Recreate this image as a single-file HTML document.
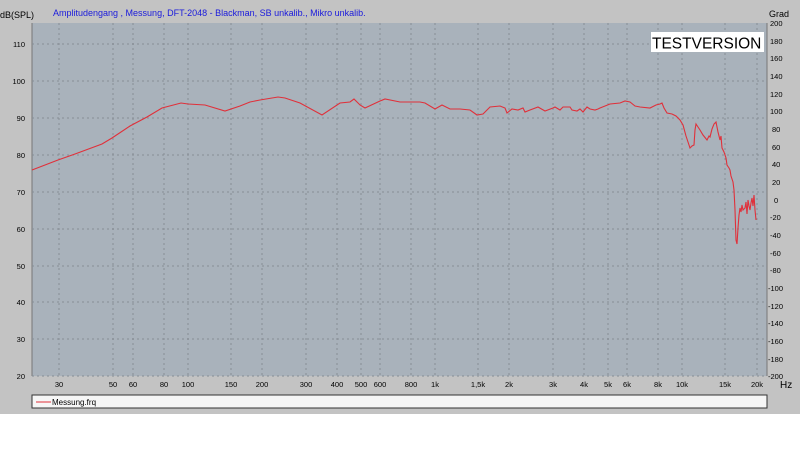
<!DOCTYPE html>
<html><head><style>
body{margin:0;width:800px;height:469px;background:#fff;overflow:hidden;font-family:"Liberation Sans",sans-serif}
</style></head><body>
<svg width="800" height="469" xmlns="http://www.w3.org/2000/svg" font-family="Liberation Sans, sans-serif">
<rect x="0" y="0" width="800" height="414" fill="#c3c3c3"/>
<rect x="32" y="23" width="735" height="353" fill="#a9b2bb"/>
<line x1="32" y1="23" x2="32" y2="376" stroke="#777"/>
<line x1="767" y1="23" x2="767" y2="376" stroke="#777"/>
<g stroke="#868d95" stroke-dasharray="2,3" stroke-width="1">
<line x1="32" y1="44" x2="767" y2="44"/><line x1="32" y1="81" x2="767" y2="81"/><line x1="32" y1="118" x2="767" y2="118"/><line x1="32" y1="155" x2="767" y2="155"/><line x1="32" y1="192" x2="767" y2="192"/><line x1="32" y1="229" x2="767" y2="229"/><line x1="32" y1="266" x2="767" y2="266"/><line x1="32" y1="302" x2="767" y2="302"/><line x1="32" y1="339" x2="767" y2="339"/><line x1="32" y1="376" x2="767" y2="376"/>
<line x1="59" y1="23" x2="59" y2="376"/><line x1="113" y1="23" x2="113" y2="376"/><line x1="133" y1="23" x2="133" y2="376"/><line x1="164" y1="23" x2="164" y2="376"/><line x1="188" y1="23" x2="188" y2="376"/><line x1="231" y1="23" x2="231" y2="376"/><line x1="262" y1="23" x2="262" y2="376"/><line x1="306" y1="23" x2="306" y2="376"/><line x1="337" y1="23" x2="337" y2="376"/><line x1="361" y1="23" x2="361" y2="376"/><line x1="380" y1="23" x2="380" y2="376"/><line x1="411" y1="23" x2="411" y2="376"/><line x1="435" y1="23" x2="435" y2="376"/><line x1="478" y1="23" x2="478" y2="376"/><line x1="509" y1="23" x2="509" y2="376"/><line x1="553" y1="23" x2="553" y2="376"/><line x1="584" y1="23" x2="584" y2="376"/><line x1="608" y1="23" x2="608" y2="376"/><line x1="627" y1="23" x2="627" y2="376"/><line x1="658" y1="23" x2="658" y2="376"/><line x1="682" y1="23" x2="682" y2="376"/><line x1="725" y1="23" x2="725" y2="376"/><line x1="757" y1="23" x2="757" y2="376"/>
</g>
<polyline fill="none" stroke="#e0303a" stroke-width="1.1" points="32,170 58,160 75,154 102,144 112,138 130,126 147,117 162,108 181,103 188,104 205,105 225,111 240,106 250,102 260,100 278,97 285,98 300,103 322,115 340,103 350,102 354,99 360,105 365,108 380,101 385,99 400,102 420,102 425,103 435,109 442,105 450,109 460,109 470,110 477,115 483,114 490,107 500,106 505,108 507,113 512,109 518,110 523,108 525,112 530,110 538,107 545,111 553,108 555,107 560,110 563,107 570,107 572,110 577,111 580,109 583,112 587,107 590,109 595,110 598,109 600,108 610,104 620,103 625,101 630,102 635,106 640,107 650,108 656,105 660,104 662,103 664,108 667,113 672,114 676,116 680,120 683,125 686,136 688,142 690,148 692,146 694,145 695,130 696,124 698,127 700,130 703,135 707,140 709,136 710,137 712,129 714,124 716,122 718,132 720,140 721,136 722,148 724,152 726,158 727,165 729,168 730,170 731,176 733,182 734,190 735,210 736,240 737,244 738,228 739,215 740,208 741,212 742,205 743,210 745,208 746,202 747,214 748,200 749,206 750,210 751,203 752,198 753,206 754,195 755,210 756,220"/>
<g font-size="7.5" fill="#000" text-anchor="end">
<text x="25" y="47">110</text><text x="25" y="84">100</text><text x="25" y="121">90</text><text x="25" y="158">80</text><text x="25" y="195">70</text><text x="25" y="232">60</text><text x="25" y="269">50</text><text x="25" y="305">40</text><text x="25" y="342">30</text><text x="25" y="379">20</text>
</g>
<g font-size="7.5" fill="#000">
<text x="770" y="26">200</text><text x="770" y="44">180</text><text x="770" y="61">160</text><text x="770" y="79">140</text><text x="770" y="97">120</text><text x="770" y="114">100</text><text x="772" y="132">80</text><text x="772" y="150">60</text><text x="772" y="167">40</text><text x="772" y="185">20</text><text x="774" y="203">0</text><text x="770" y="220">-20</text><text x="770" y="238">-40</text><text x="770" y="256">-60</text><text x="770" y="273">-80</text><text x="768" y="291">-100</text><text x="768" y="309">-120</text><text x="768" y="326">-140</text><text x="768" y="344">-160</text><text x="768" y="362">-180</text><text x="768" y="379">-200</text>
</g>
<g font-size="7.5" fill="#000" text-anchor="middle">
<text x="59" y="387">30</text><text x="113" y="387">50</text><text x="133" y="387">60</text><text x="164" y="387">80</text><text x="188" y="387">100</text><text x="231" y="387">150</text><text x="262" y="387">200</text><text x="306" y="387">300</text><text x="337" y="387">400</text><text x="361" y="387">500</text><text x="380" y="387">600</text><text x="411" y="387">800</text><text x="435" y="387">1k</text><text x="478" y="387">1,5k</text><text x="509" y="387">2k</text><text x="553" y="387">3k</text><text x="584" y="387">4k</text><text x="608" y="387">5k</text><text x="627" y="387">6k</text><text x="658" y="387">8k</text><text x="682" y="387">10k</text><text x="725" y="387">15k</text><text x="757" y="387">20k</text>
</g>
<text x="780" y="388" font-size="10">Hz</text>
<text x="0" y="18" font-size="9">dB(SPL)</text>
<text x="769" y="17" font-size="9">Grad</text>
<text x="53" y="16" font-size="9" fill="#1a1adc">Amplitudengang , Messung, DFT-2048 - Blackman, SB unkalib., Mikro unkalib.</text>
<rect x="651" y="32" width="113" height="20" fill="#fff"/>
<text x="652" y="48.5" font-size="15.5" fill="#000">TESTVERSION</text>
<rect x="32" y="395" width="735" height="13" fill="#f6f6f6" stroke="#333"/>
<line x1="36" y1="402" x2="51" y2="402" stroke="#e0303a"/>
<text x="52" y="405" font-size="8">Messung.frq</text>
</svg>
</body></html>
